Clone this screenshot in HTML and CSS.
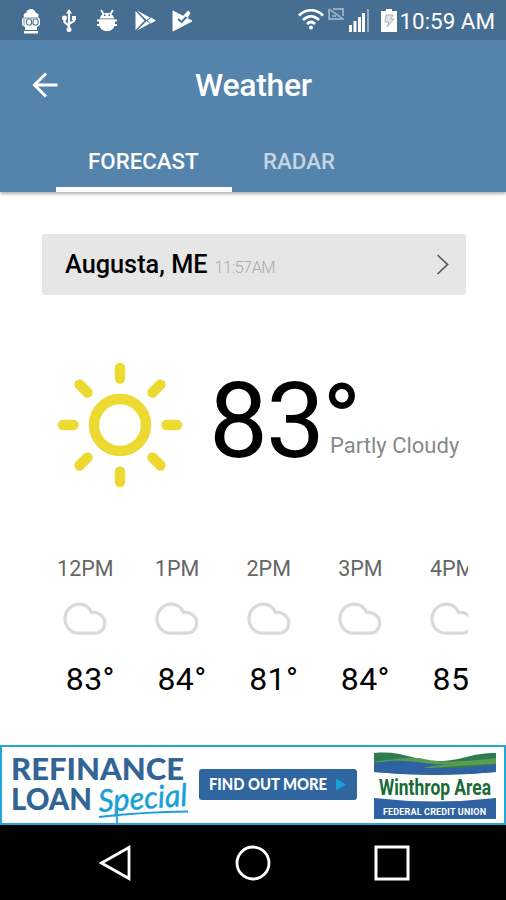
FILE: index.html
```html
<!DOCTYPE html>
<html lang="en">
<head>
    <meta charset="UTF-8">
    <meta name="viewport" content="width=device-width, initial-scale=1.0">
    <title>Weather</title>
    <link rel="stylesheet" href="styles.css">
</head>
<body>
    <div class="status_bar">
        <div class="notifications">
            <svg width="20" height="26" viewBox="0 0 20 26">
                <path fill="#fff" d="M3 8C2 6 3 4 5 4C6 1 8 0 10 0C13 0 14 2 15 4C18 4 18 7 17 8L19 10V16L16 18V21H4V18L1 16V10ZM3 22H17V24.500H3Z"/>
                <path d="M3 9V16M3.500 9H17" stroke="#6b8fae" stroke-width="1"/>
                <rect x="5.500" y="10" width="5" height="6" rx="2" fill="none" stroke="#56799a" stroke-width="1.200"/>
                <rect x="12" y="10" width="5" height="6" rx="2" fill="none" stroke="#56799a" stroke-width="1.200"/>
            </svg>
            <svg width="14" height="24" viewBox="0 0 14 24">
                <path d="M7 3V20M2.500 9V13L7 17M12 8V12L7 15" fill="none" stroke="#fff" stroke-width="2.200"/>
                <path fill="#fff" d="M7 0L10 4.500H4ZM10 7H14V11H10ZM5 9a2.500 2.500 0 1 0-5 0a2.500 2.500 0 1 0 5 0M9.500 20.500a2.500 2.500 0 1 0-5 0a2.500 2.500 0 1 0 5 0"/>
            </svg>
            <svg width="22" height="24" viewBox="0 0 22 24">
                <path d="M5 1L7.500 5M17 1L14.500 5M1 11.500H21M1 16H21" stroke="#fff" stroke-width="1.800"/>
                <path fill="#fff" d="M4 9.500C4.500 2 17.500 2 18 9.500ZM3 10.500H19V14C19 25 3 25 3 14Z"/>
                <path fill="#466e92" d="M8 5.500H9.500V7H8ZM12.500 5.500H14V7H12.500Z"/>
            </svg>
            <svg width="21" height="22" viewBox="0 0 21 22">
                <path fill="#fff" d="M0.500 1L9.500 10.500L0.500 20ZM2 0.500L15 7.500L11.500 10ZM2 20.500L15 13.500L11.500 11ZM16 7.500L21 10.500L16 13.500L12.500 10.500Z"/>
            </svg>
            <svg width="21" height="22" viewBox="0 0 21 22">
                <path fill="#fff" stroke="#fff" stroke-linejoin="round" d="M1 1L20 11L1 21Z"/>
                <path fill="#fff" d="M10 7L16 0.500L18.500 3L15 9Z"/>
                <path d="M6 9L9.500 12L14.500 7" fill="none" stroke="#466e92" stroke-width="1.900"/>
            </svg>
        </div>
        <div class="system">
            <svg class="wifi" width="26" height="21" viewBox="0 0 26 21">
                <g fill="none" stroke="#fff" stroke-width="2.600">
                    <path d="M1 6.500C8 -0.500 18 -0.500 25 6.500"/>
                    <path d="M5 11C10 6 16 6 21 11"/>
                    <path d="M9 15C11.500 12.500 14.500 12.500 17 15"/>
                </g>
                <circle cx="13" cy="18.500" r="2" fill="#fff"/>
            </svg>
            <svg class="no_sim" width="16" height="12" viewBox="0 0 16 12">
                <path d="M1 1V11H15L1 1M5 1H15V8" fill="none" stroke="#91abc1" stroke-width="2"/>
                <path d="M4 8H8" stroke="#91abc1" stroke-width="2"/>
            </svg>
            <svg class="signal" width="20" height="23" viewBox="0 0 20 23">
                <path fill="#fff" d="M0 16H3V23H0ZM4.500 12H7.500V23H4.500ZM9 8H12V23H9ZM13 4H16V23H13Z"/>
                <path fill="#91abc1" d="M18 0H20V23H18Z"/>
            </svg>
            <svg class="battery" width="16" height="23" viewBox="0 0 16 23">
                <path fill="#fff" d="M5 0H11V2H16V23H0V2H5Z"/>
                <path fill="#e3e6e8" stroke="#9ba2a8" stroke-width=".8" d="M5 6H12L10 10H13L6 18L8 13H4Z"/>
            </svg>
            <span class="clock">10:59 AM</span>
        </div>
    </div>

    <header>
        <div class="toolbar">
            <svg class="back" width="26" height="26" viewBox="0 0 26 26">
                <path d="M14 1.500L2.500 13L14 24.500M2.500 13H25.500" fill="none" stroke="#fff" stroke-width="3"/>
            </svg>
            <h1>Weather</h1>
        </div>
        <nav class="tabs">
            <div class="tab active">FORECAST</div>
            <div class="tab">RADAR</div>
        </nav>
    </header>

    <main>
        <div class="location">
            <span class="city">Augusta, ME</span>
            <span class="updated">11:57AM</span>
            <svg width="13" height="21" viewBox="0 0 13 21">
                <path d="M1.500 1L11.500 10.500L1.500 20" fill="none" stroke="#555" stroke-width="1.700"/>
            </svg>
        </div>

        <section class="current">
            <svg class="sun" width="126" height="126" viewBox="-63 -63 126 126">
                <g fill="none" stroke="#ecd932" stroke-width="10.400" stroke-linecap="round">
                    <circle r="26"/>
                    <path d="M0 -57V-46.500M0 57V46.500M-57 0H-46.500M57 0H46.500M-40.500 -40.500L-32.500 -32.500M40.500 -40.500L32.500 -32.500M-40.500 40.500L-32.500 32.500M40.500 40.500L32.500 32.500"/>
                </g>
            </svg>
            <div class="temp">83</div>
            <div class="side">
                <div class="degree">°</div>
                <div class="summary">Partly Cloudy</div>
            </div>
        </section>

        <svg width="0" height="0" class="defs">
            <symbol id="cloud" viewBox="0 0 44 34">
                <path d="M16 31.200C8 31.200 2 25 2 17C2 8.500 8.500 2.200 16.500 2.200C22 2.200 26 5 28.500 10.500C35 9.500 41.700 14 41.700 21C41.700 26.500 38 31.200 32 31.200Z" fill="none" stroke="#dadada" stroke-width="3.200" stroke-linejoin="round"/>
            </symbol>
        </svg>
        <section class="hourly">
            <div class="hour">
                <p class="time">12PM</p>
                <svg width="44" height="34"><use href="#cloud"/></svg>
                <p class="deg">83°</p>
            </div>
            <div class="hour">
                <p class="time">1PM</p>
                <svg width="44" height="34"><use href="#cloud"/></svg>
                <p class="deg">84°</p>
            </div>
            <div class="hour">
                <p class="time">2PM</p>
                <svg width="44" height="34"><use href="#cloud"/></svg>
                <p class="deg">81°</p>
            </div>
            <div class="hour">
                <p class="time">3PM</p>
                <svg width="44" height="34"><use href="#cloud"/></svg>
                <p class="deg">84°</p>
            </div>
            <div class="hour">
                <p class="time">4PM</p>
                <svg width="44" height="34"><use href="#cloud"/></svg>
                <p class="deg">85°</p>
            </div>
        </section>
    </main>

    <aside class="ad">
        <svg class="offer" width="188" height="76" viewBox="0 0 188 76">
            <g class="offer_text">
                <text x="9" y="33" textLength="173" lengthAdjust="spacingAndGlyphs">REFINANCE</text>
                <text x="9" y="63" textLength="81" lengthAdjust="spacingAndGlyphs">LOAN</text>
            </g>
            <text class="special" transform="translate(97 65) rotate(-4)" textLength="89" lengthAdjust="spacingAndGlyphs">Special</text>
            <path d="M97 70Q140 65 186 64.500M115 62V76" fill="none" stroke="#19a0d8" stroke-width="1.800"/>
        </svg>
        <div class="more">
            <svg width="158" height="31" viewBox="0 0 158 31">
                <text x="10" y="21" textLength="118" lengthAdjust="spacingAndGlyphs">FIND OUT MORE</text>
                <path d="M137 9.500L147 15.500L137 21.500Z" fill="#19a0d8"/>
            </svg>
        </div>
        <svg class="sponsor" width="122" height="67" viewBox="0 0 122 67">
            <path d="M0 1C28 -2 40 9 64 9C88 9 96 1 122 1V20Q61 26 0 20Z" fill="#2f7d4f"/>
            <path d="M0 10C22 6 34 6 46 6C56 9 76 12 122 6V12C96 12 70 16 50 16Z" fill="#5a9a52"/>
            <path d="M0 11C22 7 36 9 50 11C62 13 74 12 80 12C66 13 56 14 50 16C80 17 104 15 122 12V20Q61 26 0 20Z" fill="#2f62a3"/>
            <path d="M0 46Q61 53 122 46V67H0Z" fill="#2f62a3"/>
            <text class="bank" x="5" y="43" textLength="112" lengthAdjust="spacingAndGlyphs">Winthrop Area</text>
            <text class="union" x="9" y="63" textLength="103" lengthAdjust="spacing">FEDERAL CREDIT UNION</text>
        </svg>
    </aside>

    <footer>
        <svg width="32" height="36" viewBox="0 0 32 36">
            <path d="M2.500 18L30 2.500V33.500Z" fill="none" stroke="#fff" stroke-width="2.800"/>
        </svg>
        <svg width="36" height="36" viewBox="0 0 36 36">
            <circle cx="18" cy="18" r="16" fill="none" stroke="#fff" stroke-width="2.800"/>
        </svg>
        <svg width="36" height="36" viewBox="0 0 36 36">
            <rect x="2" y="2" width="32" height="32" fill="none" stroke="#fff" stroke-width="3"/>
        </svg>
    </footer>
</body>
</html>
```
FILE: styles.css
```css
* {
    margin: 0;
    padding: 0;
    box-sizing: border-box;
}
body {
    width: 506px;
    height: 900px;
    display: flex;
    flex-direction: column;
    overflow: hidden;
    background-color: white;
    font-family: Roboto, sans-serif;
    color: black;
}
svg {
    display: block;
    flex-shrink: 0;
}
.status_bar {
    height: 40px;
    padding: 0 11px 0 21px;
    display: flex;
    justify-content: space-between;
    background-color: #466e92;
}
.notifications {
    display: flex;
    align-items: center;
    gap: 17px;
}
.notifications svg {
    margin-top: 1px;
}
.notifications svg:nth-of-type(1) {
    margin-right: 4px;
    margin-top: 3px;
}
.notifications svg:nth-of-type(2) {
    margin-right: 3px;
}
.notifications svg:nth-of-type(5) {
    margin-left: -1px;
}
.system {
    display: flex;
    align-items: flex-start;
}
.wifi {
    margin-top: 9px;
}
.no_sim {
    margin: 8px 5px 0 4px;
}
.signal {
    margin-top: 9px;
}
.battery {
    margin: 9px 3px 0 12px;
}
.clock {
    font-size: 22.4px;
    line-height: 42px;
    color: white;
    white-space: nowrap;
}
header {
    height: 152px;
    background-color: #5484ac;
    box-shadow: 0 2px 3px rgba(0, 0, 0, 0.3);
    color: white;
}
.toolbar {
    height: 90px;
    padding-left: 32px;
    display: flex;
    align-items: center;
}
h1 {
    margin-left: 137px;
    font-size: 32px;
    font-weight: 500;
    letter-spacing: -0.3px;
}
.tabs {
    height: 62px;
    padding-left: 56px;
    display: flex;
}
.tab {
    height: 62px;
    padding: 0 31px;
    border-bottom: 5px solid transparent;
    font-size: 22.3px;
    font-weight: 500;
    line-height: 63px;
    color: #c3d5e5;
}
.tab.active {
    width: 176px;
    padding-left: 32px;
    border-bottom-color: white;
    color: white;
}
main {
    height: 553px;
    padding: 42px 38px 0 42px;
}
.location {
    width: 424px;
    height: 61px;
    padding: 0 17px 0 23px;
    display: flex;
    align-items: center;
    border-radius: 3px;
    background-color: #e6e6e6;
}
.city {
    font-size: 25.3px;
    font-weight: 500;
}
.updated {
    margin: 6px auto 0 7px;
    font-size: 16.5px;
    font-weight: 300;
    letter-spacing: -0.6px;
    color: #aaa;
}
.current {
    height: 126px;
    margin: 67px 0 0 15px;
    display: flex;
}
.temp {
    width: 116px;
    margin-left: 26px;
    font-size: 105px;
    line-height: 119px;
    letter-spacing: -2px;
}
.degree {
    height: 79px;
    margin-left: -3px;
    font-size: 106px;
    line-height: 122px;
}
.summary {
    margin-left: 5px;
    font-size: 22px;
    line-height: 10px;
    color: #888;
    white-space: nowrap;
}
.defs {
    position: absolute;
}
.hourly {
    height: 160px;
    margin-top: 68px;
    display: flex;
    overflow: hidden;
}
.hour {
    width: 91.7px;
    flex-shrink: 0;
    padding-right: 5px;
    display: flex;
    flex-direction: column;
    align-items: center;
}
.time {
    font-size: 21.5px;
    line-height: 26px;
    color: #666;
}
.hour svg {
    margin-top: 20px;
}
.deg {
    margin: 23px 0 0 10px;
    font-size: 32px;
    line-height: 40px;
    letter-spacing: 0.4px;
}
.ad {
    height: 80px;
    display: flex;
    align-items: flex-start;
    border: 2px solid #22a7d8;
    background-color: white;
}
.offer_text {
    font-family: Lato, sans-serif;
    font-size: 31px;
    font-weight: 900;
    fill: #326496;
}
.special {
    font-family: Lato, sans-serif;
    font-size: 31px;
    font-style: italic;
    fill: #19a0d8;
    stroke: #19a0d8;
    stroke-width: 0.5px;
}
.more {
    margin: 22px 0 0 9px;
    border-radius: 3px;
    background-color: #2f66a0;
}
.more text {
    font-family: Lato, sans-serif;
    font-size: 16.5px;
    font-weight: 900;
    fill: white;
}
.sponsor {
    margin: 5px 0 0 17px;
}
.bank {
    font-family: Roboto, sans-serif;
    font-size: 22px;
    font-weight: 700;
    fill: #186b36;
}
.union {
    font-family: Roboto, sans-serif;
    font-size: 9px;
    font-weight: 700;
    fill: white;
}
footer {
    height: 75px;
    padding: 1px 96px 0 99px;
    display: flex;
    justify-content: space-between;
    align-items: center;
    background-color: black;
}
```
